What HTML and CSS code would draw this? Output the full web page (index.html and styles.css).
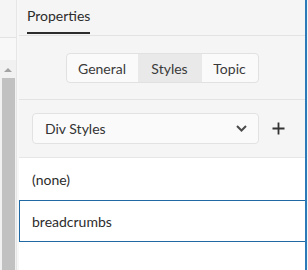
FILE: index.html
```html
<!DOCTYPE html>
<html lang="en">
<head>
    <meta charset="UTF-8">
    <title>Properties</title>
    <link rel="stylesheet" href="styles.css">
</head>
<body>
<div class="frame">
    <div class="side">
        <div class="side-head"></div>
        <div class="side-blank"></div>
        <div class="scrollbar">
            <div class="arrow"></div>
            <div class="thumb"></div>
        </div>
    </div>
    <div class="side-gap"></div>

    <div class="panel">
        <div class="tabs">
            <div class="tab">Properties</div>
        </div>

        <div class="seg-area">
            <div class="segmented">
                <button class="seg seg-general">General</button>
                <button class="seg seg-styles active">Styles</button>
                <button class="seg seg-topic">Topic</button>
            </div>
        </div>

        <div class="select-area">
            <div class="select">
                <span>Div Styles</span>
                <svg class="chev" width="11" height="7" viewBox="0 0 11 7">
                    <path d="M1 1 L5.5 5.5 L10 1" fill="none" stroke="#4b4b4b" stroke-width="2"/>
                </svg>
            </div>
            <svg class="plus" width="13" height="13" viewBox="0 0 13 13">
                <path d="M6.5 0.5 V12.5 M0.5 6.5 H12.5" stroke="#333" stroke-width="1.8"/>
            </svg>
        </div>

        <div class="list">
            <div class="row">(none)</div>
            <div class="row selected">breadcrumbs</div>
        </div>
    </div>

    <div class="edge"></div>
</div>
</body>
</html>
```

FILE: styles.css
```css
html, body {
    margin: 0;
    height: 100%;
}
body {
    font-family: Lato, "Open Sans", sans-serif;
    color: #2c2c2c;
    background: #f5f5f5;
}
.frame {
    display: flex;
    width: 308px;
    height: 270px;
    overflow: hidden;
}

/* left strip with scrollbar */
.side {
    width: 16px;
    border-right: 1px solid #e6e6e6;
    display: flex;
    flex-direction: column;
}
.side-head {
    height: 37px;
    background: #f5f5f5;
    border-bottom: 1px solid #e3e3e3;
}
.side-blank {
    height: 22px;
    background: #f8f8f8;
}
.scrollbar {
    flex: 1;
    background: #f1f1f1;
    display: flex;
    flex-direction: column;
    align-items: center;
}
.arrow {
    margin-top: 8px;
    width: 0;
    height: 0;
    border-left: 4px solid transparent;
    border-right: 4px solid transparent;
    border-bottom: 4px solid #a3a3a3;
}
.thumb {
    margin-top: 6px;
    margin-left: 1px;
    width: 13px;
    flex: 1;
    background: #c1c1c1;
}
.side-gap {
    width: 2px;
    background: #f7f7f7;
}

/* main panel */
.panel {
    flex: 1;
    display: flex;
    flex-direction: column;
    background: #f5f5f5;
}
.tabs {
    height: 35px;
    border-bottom: 1px solid #e3e3e3;
    padding-left: 8px;
    display: flex;
    align-items: flex-end;
}
.tab {
    font-size: 14px;
    padding-bottom: 8px;
    margin-bottom: 1px;
    border-bottom: 2px solid #2c2c2c;
}
.seg-area {
    padding: 17px 0 16px;
    border-bottom: 1px solid #e3e3e3;
    display: flex;
    justify-content: center;
}
.segmented {
    display: flex;
    border: 1px solid #e1e1e1;
    border-radius: 4px;
    overflow: hidden;
    background: #fafafa;
}
.seg {
    font-family: inherit;
    font-size: 14px;
    color: #3a3a3a;
    height: 28px;
    border: none;
    background: transparent;
    padding: 0;
    text-align: center;
}
.seg-general {
    width: 71px;
}
.seg-styles {
    width: 64px;
}
.seg-topic {
    width: 56px;
}
.seg.active {
    background: #e9e9e9;
}
.select-area {
    padding: 13px 13px;
    border-bottom: 1px solid #e6e6e6;
    display: flex;
    align-items: center;
}
.select {
    height: 29px;
    border: 1px solid #e2e2e2;
    border-radius: 4px;
    background: #fafafa;
    display: flex;
    align-items: center;
    justify-content: space-between;
    padding: 0 11px 0 12px;
    width: 202px;
    font-size: 14px;
    color: #333;
}
.plus {
    margin-left: 13px;
}
.list {
    flex: 1;
    background: #fff;
}
.row {
    height: 42px;
    box-sizing: border-box;
    display: flex;
    align-items: center;
    padding-left: 13px;
    font-size: 14px;
    color: #2c2c2c;
}
.row.selected {
    border: 1px solid #1f6aa5;
    border-right: none;
    padding-left: 12px;
}
.edge {
    width: 2px;
    background: #2c7ab8;
    margin-right: 1px;
}
```
